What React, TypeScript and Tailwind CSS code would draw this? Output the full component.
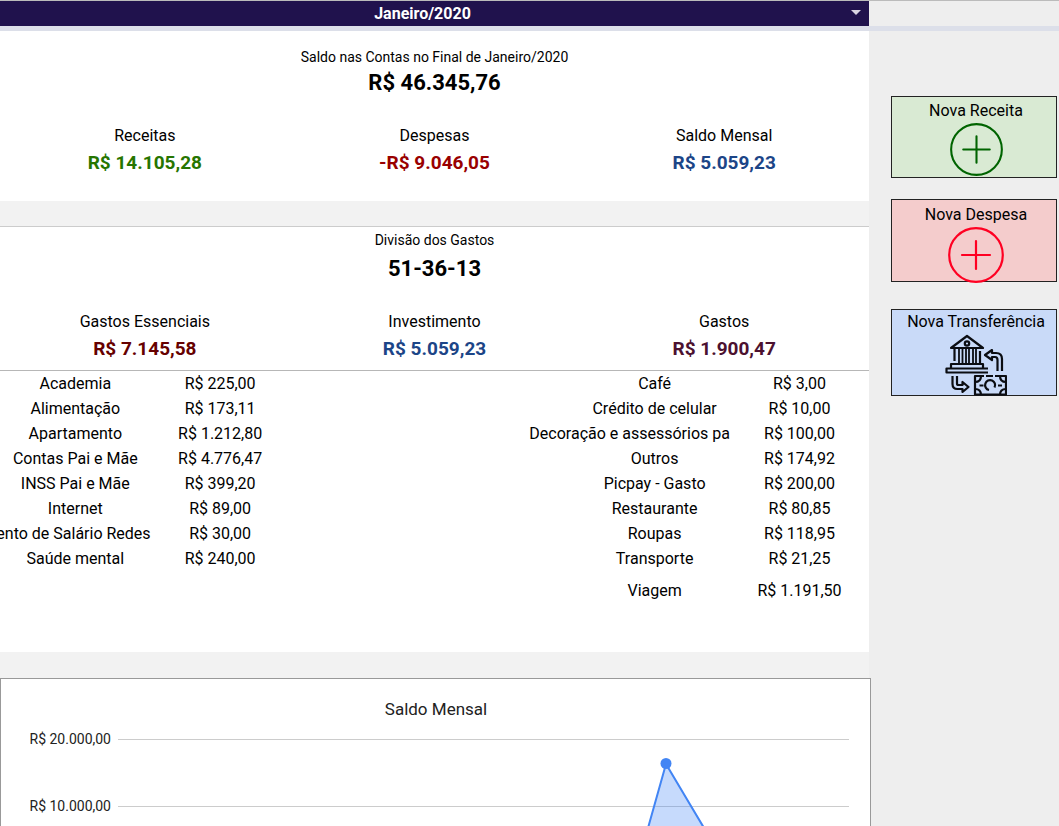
import React from "react";

type Tone = { label: string; value: string; color: string };
type Row = [string, string];

const balance: Tone[] = [
  { label: "Receitas", value: "R$ 14.105,28", color: "text-[#267500]" },
  { label: "Despesas", value: "-R$ 9.046,05", color: "text-[#990000]" },
  { label: "Saldo Mensal", value: "R$ 5.059,23", color: "text-[#1c4587]" },
];

const division: Tone[] = [
  { label: "Gastos Essenciais", value: "R$ 7.145,58", color: "text-[#660000]" },
  { label: "Investimento", value: "R$ 5.059,23", color: "text-[#1c4587]" },
  { label: "Gastos", value: "R$ 1.900,47", color: "text-[#4c1130]" },
];

const essentials: Row[] = [
  ["Academia", "R$ 225,00"],
  ["Alimentação", "R$ 173,11"],
  ["Apartamento", "R$ 1.212,80"],
  ["Contas Pai e Mãe", "R$ 4.776,47"],
  ["INSS Pai e Mãe", "R$ 399,20"],
  ["Internet", "R$ 89,00"],
  ["ento de Salário Redes", "R$ 30,00"],
  ["Saúde mental", "R$ 240,00"],
];

const expenses: Row[] = [
  ["Café", "R$ 3,00"],
  ["Crédito de celular", "R$ 10,00"],
  ["Decoração e assessórios pa", "R$ 100,00"],
  ["Outros", "R$ 174,92"],
  ["Picpay - Gasto", "R$ 200,00"],
  ["Restaurante", "R$ 80,85"],
  ["Roupas", "R$ 118,95"],
  ["Transporte", "R$ 21,25"],
  ["Viagem", "R$ 1.191,50"],
];

function Figures({ items }: { items: Tone[] }) {
  return (
    <dl className="grid grid-cols-3 text-center">
      {items.map((item) => (
        <div key={item.label}>
          <dt className="text-base leading-6">{item.label}</dt>
          <dd className={`text-[19px] leading-[30px] font-bold ${item.color}`}>{item.value}</dd>
        </div>
      ))}
    </dl>
  );
}

function PlusIcon({ className }: { className: string }) {
  return (
    <svg viewBox="0 0 56 56" className={className} fill="none" stroke="currentColor" strokeWidth="2.200" strokeLinecap="round" aria-hidden="true">
      <circle cx="28" cy="28" r="26.800" />
      <path d="M28 14v28M14 28h28" />
    </svg>
  );
}

function TransferIcon() {
  return (
    <svg viewBox="0 0 62 62" className="h-[62px] w-[62px] shrink-0" fill="none" stroke="#0b0d12" strokeWidth="2.200" strokeLinejoin="round" aria-hidden="true">
      <path d="M6 14 22 2 38 14Z" />
      <circle cx="22" cy="9.500" r="2.200" />
      <path d="M9.500 14v13M35 17v13" />
      <path d="M14 14v16M17.500 14v16M21 14v16M24 14v16M28 14v16M31 14v16" strokeWidth="1.800" />
      <path d="M6 34v-4h32v4M43 38.500H1.500v-4H43" />
      <path d="M57 37V25q0-6-6-6H47v-3l-7 5 7 5v-3h3q2.500 0 2.500 3v11" />
      <path d="M7.500 42v8q0 5 5 5h5v3l6-5-6-5v3h-4q-1.500 0-1.500-1.500V42" />
      <path d="M39 42h-9v18.500h31V42H50M41 42h7" />
      <path d="M30 48q6 0 6-6M61 48q-6 0-6-6M30 55q6 0 6 6M61 55q-6 0-6 6" />
      <path d="M34.500 51.500h4M53 51.500h4M44 56a5 5 0 1 1 5.500-2.500" />
    </svg>
  );
}

function ActionCard({ label, className, children }: { label: string; className: string; children: React.ReactNode }) {
  return (
    <button type="button" className={`flex w-full flex-col items-center border border-[#222] pl-1 text-base leading-6 text-black ${className}`}>
      <span>{label}</span>
      {children}
    </button>
  );
}

export default function App() {
  return (
    <div className="flex min-h-screen flex-col bg-[#eeeeee] font-['Roboto',sans-serif] text-black">
      <header className="border-t border-b-[5px] border-t-[#bbbbbb] border-b-[#dcdfe9]">
        <div className="relative mr-[190px] h-[25px] bg-[#20124d]">
          <select
            aria-label="Mês"
            className="block h-full w-full appearance-none bg-transparent pr-6 text-center text-base leading-6 font-bold text-white [text-align-last:center]"
          >
            <option>Janeiro/2020</option>
          </select>
          <svg viewBox="0 0 10 5" className="pointer-events-none absolute top-[9px] right-[8px] h-[5px] w-[10px]" aria-hidden="true">
            <path d="M0 0h10L5 5z" fill="#d9d5e3" />
          </svg>
        </div>
      </header>

      <div className="flex grow">
        <main className="flex min-w-0 grow flex-col bg-white">
          <section className="h-[170px] pt-[14px]">
            <div className="text-center">
              <h1 className="text-[14px] leading-6">Saldo nas Contas no Final de Janeiro/2020</h1>
              <p className="text-[22px] leading-[28px] font-bold">R$ 46.345,76</p>
            </div>
            <div className="pt-[27px]">
              <Figures items={balance} />
            </div>
          </section>

          <div className="h-[26px] border-b border-[#cccccc] bg-[#f2f2f2]" />

          <section className="h-[425px]">
            <div className="pt-px text-center">
              <h2 className="text-[14px] leading-6">Divisão dos Gastos</h2>
              <p className="text-[22px] leading-[34px] font-bold">51-36-13</p>
            </div>
            <div className="border-b border-[#b7b7b7] pt-6 pb-[6px]">
              <Figures items={division} />
            </div>
            <div className="flex items-start justify-between text-center text-base leading-[25px] whitespace-nowrap">
              <table className="w-1/3 table-fixed">
                <colgroup>
                  <col className="w-[52%]" />
                  <col />
                </colgroup>
                <tbody>
                  {essentials.map(([name, value]) => (
                    <tr key={name}>
                      <th scope="row" className="p-0 font-normal">
                        <div className={`flex overflow-hidden ${name.startsWith("ento") ? "justify-end" : "justify-center"}`}>
                          <span>{name}</span>
                        </div>
                      </th>
                      <td className="p-0">{value}</td>
                    </tr>
                  ))}
                </tbody>
              </table>
              <table className="w-1/2 table-fixed">
                <colgroup>
                  <col />
                  <col className="w-[32%]" />
                </colgroup>
                <tbody>
                  {expenses.map(([name, value]) => (
                    <tr key={name} className="last:h-[39px]">
                      <th scope="row" className="p-0 font-normal">
                        <div className={`flex pl-[49%] ${name.startsWith("Decoração") ? "justify-end" : "justify-center"}`}>
                          <span>{name}</span>
                        </div>
                      </th>
                      <td className="p-0">{value}</td>
                    </tr>
                  ))}
                </tbody>
              </table>
            </div>
          </section>

          <div className="h-[26px] bg-[#f2f2f2]" />

          <section className="-mr-[2px] h-[148px] overflow-hidden border border-b-0 border-[#999999] bg-white">
            <svg viewBox="0 0 869 147" className="block w-full" role="img" aria-label="Saldo Mensal" fontFamily="Roboto, sans-serif">
              <text x="435" y="36" textAnchor="middle" fontSize="17" fill="#222">Saldo Mensal</text>
              <g fontSize="14" fill="#222" textAnchor="end">
                <text x="110" y="65">R$ 20.000,00</text>
                <text x="110" y="132">R$ 10.000,00</text>
              </g>
              <path d="M117 60.500h731M117 127.500h731" stroke="#cccccc" />
              <path d="M647 147 665 85 703 147z" fill="#4285f4" fillOpacity="0.3" />
              <path d="M647 149 665 85 703 149" fill="none" stroke="#4285f4" strokeWidth="2" />
              <circle cx="665" cy="84.500" r="5.500" fill="#4285f4" />
            </svg>
          </section>
        </main>

        <aside className="flex w-[190px] shrink-0 flex-col pt-[65px] pr-[2px] pl-[22px]">
          <ActionCard label="Nova Receita" className="mb-[21px] h-[82px] bg-[#d9ead3] pt-[2px]">
            <PlusIcon className="h-[53px] w-[53px] shrink-0 text-[#006400]" />
          </ActionCard>
          <ActionCard label="Nova Despesa" className="mb-[27px] h-[83px] bg-[#f4cccc] pt-[3px]">
            <PlusIcon className="h-[56px] w-[56px] shrink-0 text-[#ff0022]" />
          </ActionCard>
          <ActionCard label="Nova Transferência" className="h-[87px] bg-[#c9daf8]">
            <TransferIcon />
          </ActionCard>
        </aside>
      </div>
    </div>
  );
}
